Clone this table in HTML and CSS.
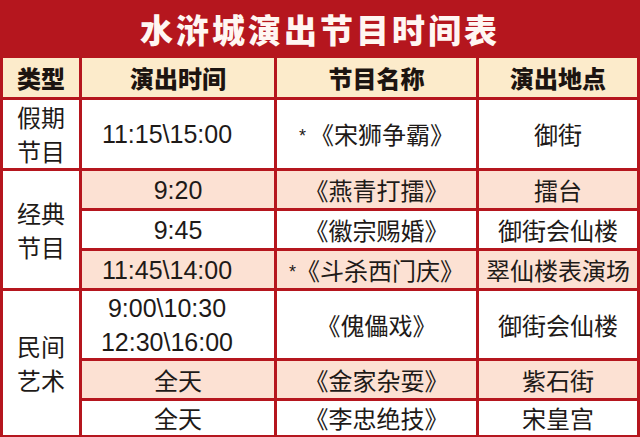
FILE: index.html
```html
<!DOCTYPE html>
<html lang="zh">
<head>
<meta charset="utf-8">
<link rel="stylesheet" href="styles.css">
</head>
<body>
<div class="sheet">
  <h1 class="title">水浒城演出节目时间表</h1>
  <div class="grid">
    <div class="cell head">类型</div>
    <div class="cell head">演出时间</div>
    <div class="cell head">节目名称</div>
    <div class="cell head">演出地点</div>

    <div class="cell type r1">假期<br>节目</div>
    <div class="cell num long">11:15\15:00</div>
    <div class="cell"><span class="star">*</span>《宋狮争霸》</div>
    <div class="cell">御街</div>

    <div class="cell type r2">经典<br>节目</div>
    <div class="cell num pink">9:20</div>
    <div class="cell pink">《燕青打擂》</div>
    <div class="cell pink">擂台</div>

    <div class="cell num">9:45</div>
    <div class="cell">《徽宗赐婚》</div>
    <div class="cell">御街会仙楼</div>

    <div class="cell num long pink">11:45\14:00</div>
    <div class="cell pink"><span class="star tight">*</span>《斗杀西门庆》</div>
    <div class="cell pink">翠仙楼表演场</div>

    <div class="cell type r3">民间<br>艺术</div>
    <div class="cell num long">9:00\10:30<br>12:30\16:00</div>
    <div class="cell">《傀儡戏》</div>
    <div class="cell">御街会仙楼</div>

    <div class="cell pink">全天</div>
    <div class="cell pink">《金家杂耍》</div>
    <div class="cell pink">紫石街</div>

    <div class="cell">全天</div>
    <div class="cell">《李忠绝技》</div>
    <div class="cell">宋皇宫</div>
  </div>
</div>
</body>
</html>
```

FILE: styles.css
```css
html, body {
  margin: 0;
  padding: 0;
  background: #b5161e;
}

.sheet {
  width: 640px;
  height: 437px;
  background: #b5161e;
  font-family: "Noto Sans CJK SC", "Liberation Sans", sans-serif;
  color: #1e1a18;
  overflow: hidden;
}

.title {
  margin: 0;
  height: 55px;
  display: flex;
  align-items: center;
  justify-content: center;
  padding-top: 4px;
  box-sizing: border-box;
  color: #fff6f2;
  font-size: 33px;
  font-weight: 900;
  letter-spacing: 3px;
  line-height: 1;
}

.grid {
  display: grid;
  grid-template-columns: 76px 192px 199px 158px;
  grid-template-rows: 39px 68px 37px 37px 37px 67px 37px 34px;
  gap: 3px;
  padding: 3px 3px 3px 3px;
}

.cell {
  background: #ffffff;
  display: flex;
  align-items: center;
  justify-content: center;
  text-align: center;
  font-size: 24px;
  line-height: 34px;
  white-space: nowrap;
}

.head {
  background: #fcebcb;
  font-weight: 900;
  color: #1c1410;
  font-size: 24px;
}

.pink {
  background: #fce1d3;
}

.num {
  font-family: "Liberation Sans", "Noto Sans CJK SC", sans-serif;
  font-size: 25px;
  padding-left: 0;
}

.num.long {
  padding-right: 22px;
}

.type.r1 { grid-row: span 1; }
.type.r2 { grid-row: span 3; }
.type.r3 { grid-row: span 3; }

.star {
  font-family: "Liberation Sans", sans-serif;
  font-size: 18px;
  margin-right: 4px;
  position: relative;
  top: 2px;
}

.star.tight {
  margin-right: 0;
}
```
